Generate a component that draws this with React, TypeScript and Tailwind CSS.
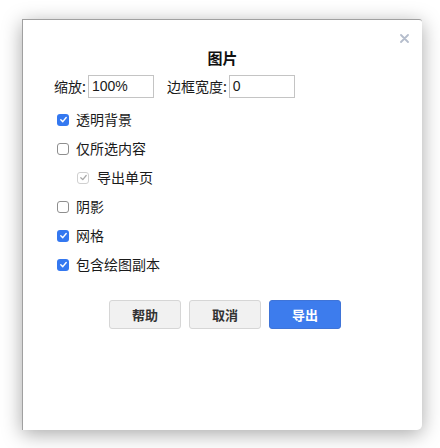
import React from "react";

const font = { fontFamily: '"PingFang SC","Noto Sans CJK SC","Liberation Sans",sans-serif' };

function Check({ checked, disabled }: { checked?: boolean; disabled?: boolean }) {
  if (disabled) {
    return (
      <span className="w-[12px] h-[12px] rounded-[3px] border border-[#d0d0d0] bg-white flex items-center justify-center shrink-0">
        <svg width="9" height="9" viewBox="0 0 10 10"><path d="M2 5.2 L4.2 7.4 L8 2.8" fill="none" stroke="#a8a8a8" strokeWidth="1.4" strokeLinecap="round" strokeLinejoin="round"/></svg>
      </span>
    );
  }
  if (checked) {
    return (
      <span className="w-[12px] h-[12px] rounded-[3px] bg-[#3478f0] flex items-center justify-center shrink-0">
        <svg width="9" height="9" viewBox="0 0 10 10"><path d="M2 5.2 L4.2 7.4 L8 2.8" fill="none" stroke="#ffffff" strokeWidth="1.6" strokeLinecap="round" strokeLinejoin="round"/></svg>
      </span>
    );
  }
  return <span className="w-[12px] h-[12px] rounded-[3px] border border-[#8e8e8e] bg-white shrink-0" />;
}

function Row({ label, checked, disabled, nested }: { label: string; checked?: boolean; disabled?: boolean; nested?: boolean }) {
  return (
    <div className={"h-[29px] flex items-center " + (nested ? "pl-[20px] gap-[8px]" : "gap-[7px]")}>
      <Check checked={checked} disabled={disabled} />
      <span className="text-[14px] text-[#1a1a1a]">{label}</span>
    </div>
  );
}

export default function App() {
  return (
    <div className="w-[440px] h-[448px] bg-white pt-[19px] pl-[22px]" style={font}>
      <div className="relative w-[400px] h-[411px] bg-white border-l-[1.5px] border-t border-[#a0a0a0] rounded-br-[5px] rounded-tr-[3px] shadow-[0_4px_20px_rgba(0,0,0,0.35)] pt-[28px]">
        <div className="absolute top-[14px] right-[13px]">
          <svg width="9" height="9" viewBox="0 0 9 9"><path d="M1 1 L8 8 M8 1 L1 8" stroke="#b5bdcc" strokeWidth="1.8" strokeLinecap="round"/></svg>
        </div>
        <div className="text-center text-[15px] font-bold text-[#111] leading-[20px] h-[20px]">图片</div>
        <div className="mt-[7px] pl-[31px] flex items-center text-[14px] text-[#1a1a1a]">
          <span>缩放:</span>
          <div className="ml-[2px] w-[66px] h-[23px] border border-[#c4c4c4] pl-[3px] flex items-center" style={{ fontFamily: '"Helvetica","Liberation Sans",sans-serif' }}>100%</div>
          <span className="ml-[13px]">边框宽度:</span>
          <div className="ml-[2px] w-[66px] h-[23px] border border-[#c4c4c4] pl-[3px] flex items-center" style={{ fontFamily: '"Helvetica","Liberation Sans",sans-serif' }}>0</div>
        </div>
        <div className="mt-[7px] pl-[34px] flex flex-col">
          <Row label="透明背景" checked />
          <Row label="仅所选内容" />
          <Row label="导出单页" disabled nested />
          <Row label="阴影" />
          <Row label="网格" checked />
          <Row label="包含绘图副本" checked />
        </div>
        <div className="mt-[21px] pl-[86px] flex gap-[8px]">
          <button className="w-[72px] h-[29px] rounded-[3px] border border-[#d6d6d6] bg-[#f1f1f1] text-[13px] font-semibold text-[#333]">帮助</button>
          <button className="w-[72px] h-[29px] rounded-[3px] border border-[#d6d6d6] bg-[#f1f1f1] text-[13px] font-semibold text-[#333]">取消</button>
          <button className="w-[72px] h-[29px] rounded-[3px] border border-[#3f74d8] bg-[#3d7ced] text-[13px] font-semibold text-white">导出</button>
        </div>
      </div>
    </div>
  );
}
